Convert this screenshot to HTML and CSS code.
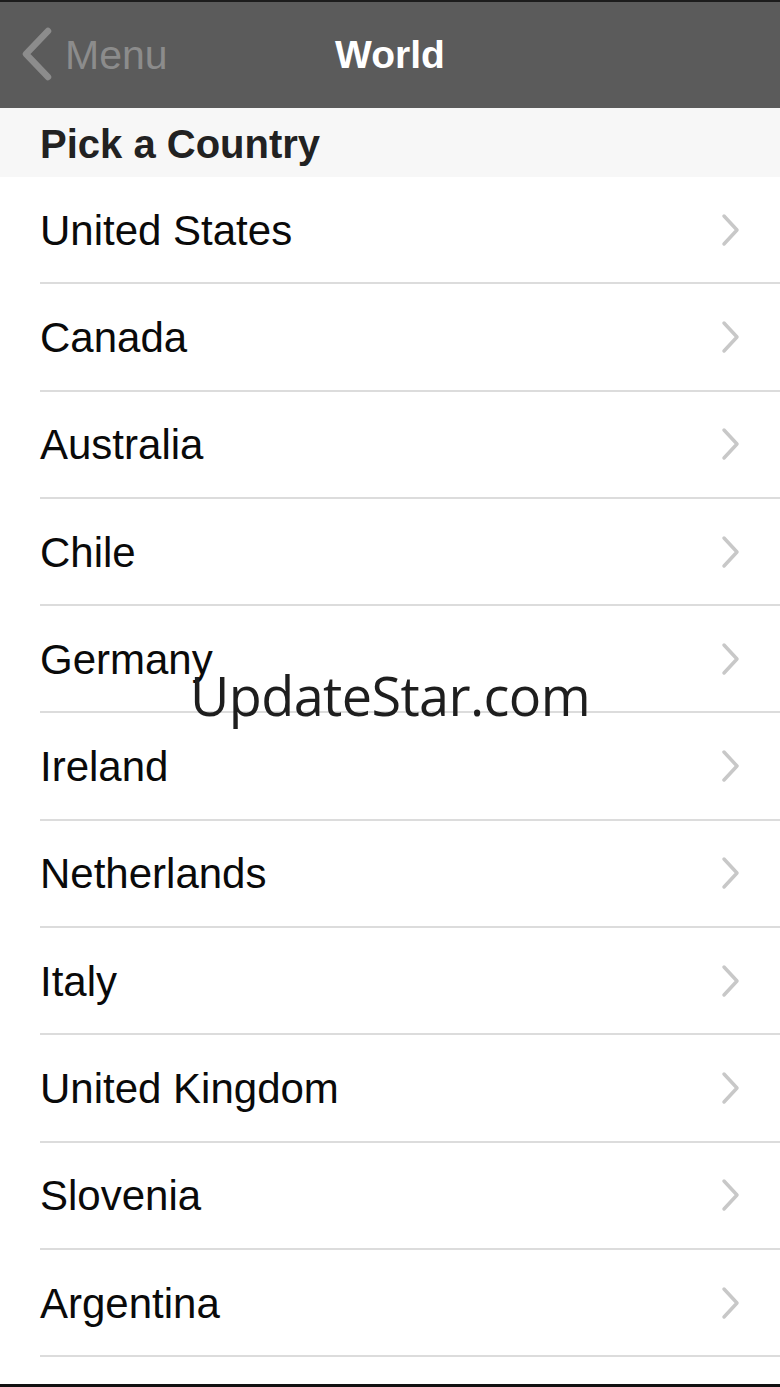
FILE: index.html
```html
<!DOCTYPE html>
<html>
<head>
<meta charset="utf-8">
<link rel="stylesheet" href="styles.css">
</head>
<body>
<div class="screen">
  <div class="navbar">
    <div class="back">
      <svg class="back-icon" width="36" height="54" viewBox="0 0 36 54"><path d="M30 4 L8 27 L30 50" fill="none" stroke="#8c8c8c" stroke-width="6.5" stroke-linecap="round" stroke-linejoin="round"/></svg>
      <span class="back-label">Menu</span>
    </div>
    <div class="title">World</div>
  </div>
  <div class="section">Pick a Country</div>
  <ul class="list">
    <li class="row"><span>United States</span><svg class="chev" width="20" height="34" viewBox="0 0 20 34"><path d="M3 3 L16 17 L3 31" fill="none" stroke="#c8c8c8" stroke-width="3.5" stroke-linecap="round" stroke-linejoin="round"/></svg></li>
    <li class="row"><span>Canada</span><svg class="chev" width="20" height="34" viewBox="0 0 20 34"><path d="M3 3 L16 17 L3 31" fill="none" stroke="#c8c8c8" stroke-width="3.5" stroke-linecap="round" stroke-linejoin="round"/></svg></li>
    <li class="row"><span>Australia</span><svg class="chev" width="20" height="34" viewBox="0 0 20 34"><path d="M3 3 L16 17 L3 31" fill="none" stroke="#c8c8c8" stroke-width="3.5" stroke-linecap="round" stroke-linejoin="round"/></svg></li>
    <li class="row"><span>Chile</span><svg class="chev" width="20" height="34" viewBox="0 0 20 34"><path d="M3 3 L16 17 L3 31" fill="none" stroke="#c8c8c8" stroke-width="3.5" stroke-linecap="round" stroke-linejoin="round"/></svg></li>
    <li class="row"><span>Germany</span><svg class="chev" width="20" height="34" viewBox="0 0 20 34"><path d="M3 3 L16 17 L3 31" fill="none" stroke="#c8c8c8" stroke-width="3.5" stroke-linecap="round" stroke-linejoin="round"/></svg></li>
    <li class="row"><span>Ireland</span><svg class="chev" width="20" height="34" viewBox="0 0 20 34"><path d="M3 3 L16 17 L3 31" fill="none" stroke="#c8c8c8" stroke-width="3.5" stroke-linecap="round" stroke-linejoin="round"/></svg></li>
    <li class="row"><span>Netherlands</span><svg class="chev" width="20" height="34" viewBox="0 0 20 34"><path d="M3 3 L16 17 L3 31" fill="none" stroke="#c8c8c8" stroke-width="3.5" stroke-linecap="round" stroke-linejoin="round"/></svg></li>
    <li class="row"><span>Italy</span><svg class="chev" width="20" height="34" viewBox="0 0 20 34"><path d="M3 3 L16 17 L3 31" fill="none" stroke="#c8c8c8" stroke-width="3.5" stroke-linecap="round" stroke-linejoin="round"/></svg></li>
    <li class="row"><span>United Kingdom</span><svg class="chev" width="20" height="34" viewBox="0 0 20 34"><path d="M3 3 L16 17 L3 31" fill="none" stroke="#c8c8c8" stroke-width="3.5" stroke-linecap="round" stroke-linejoin="round"/></svg></li>
    <li class="row"><span>Slovenia</span><svg class="chev" width="20" height="34" viewBox="0 0 20 34"><path d="M3 3 L16 17 L3 31" fill="none" stroke="#c8c8c8" stroke-width="3.5" stroke-linecap="round" stroke-linejoin="round"/></svg></li>
    <li class="row"><span>Argentina</span><svg class="chev" width="20" height="34" viewBox="0 0 20 34"><path d="M3 3 L16 17 L3 31" fill="none" stroke="#c8c8c8" stroke-width="3.5" stroke-linecap="round" stroke-linejoin="round"/></svg></li>
  </ul>
  <div class="bottom-bar"></div>
  <div class="watermark">UpdateStar.com</div>
</div>
</body>
</html>
```
FILE: styles.css
```css
html, body {
  margin: 0;
  padding: 0;
  background: #ffffff;
}
.screen {
  position: relative;
  width: 780px;
  height: 1387px;
  overflow: hidden;
  font-family: "Liberation Sans", Arial, sans-serif;
  display: flex;
  flex-direction: column;
}
.navbar {
  height: 106px;
  border-top: 2px solid #1c1c1c;
  background: #5b5b5b;
  position: relative;
  display: flex;
  align-items: center;
  justify-content: center;
  flex-shrink: 0;
}
.back {
  position: absolute;
  left: 18px;
  top: 0;
  bottom: 0;
  display: flex;
  align-items: center;
  gap: 11px;
}
.back-icon {
  display: block;
  margin-top: -2px;
}
.back-label {
  color: #8c8c8c;
  font-size: 41px;
  margin-top: 0;
}
.title {
  color: #ffffff;
  font-weight: bold;
  font-size: 39px;
  margin-top: 0;
}
.section {
  height: 69px;
  background: #f7f7f7;
  color: #222222;
  font-weight: bold;
  font-size: 40px;
  padding-left: 40px;
  display: flex;
  align-items: center;
  box-sizing: border-box;
  padding-top: 4px;
  flex-shrink: 0;
}
.list {
  list-style: none;
  margin: 0;
  padding: 0 0 0 40px;
}
.row {
  height: 107.3px;
  box-sizing: border-box;
  border-bottom: 2px solid #dcdcdc;
  display: flex;
  align-items: center;
  justify-content: space-between;
  padding-right: 39px;
  color: #0a0a0a;
  font-size: 42px;
}
.row span {
  margin-top: 2px;
}
.chev {
  display: block;
}
.bottom-bar {
  position: absolute;
  left: 0;
  right: 0;
  bottom: 0;
  height: 3px;
  background: #111111;
}
.watermark {
  position: absolute;
  left: 190px;
  top: 668px;
  font-family: "Open Sans", "DejaVu Sans", sans-serif;
  font-size: 54px;
  color: #1e1e1e;
  letter-spacing: -0.6px;
  line-height: 1;
}
```
